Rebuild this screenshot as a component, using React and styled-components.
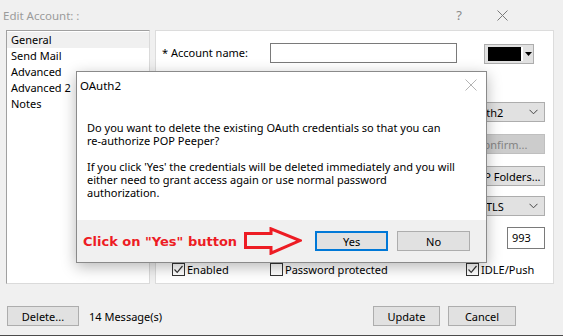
import React from "react";
import styled, { createGlobalStyle } from "styled-components";

const UI_FONT = `"Noto Sans", "Open Sans", sans-serif`;

const GlobalStyle = createGlobalStyle`
  html, body { margin: 0; padding: 0; background: #f0f0f0; }
  body { font-family: ${UI_FONT}; font-size: 11px; color: #000; }
  * { box-sizing: border-box; }
`;

const Window = styled.div`
  position: relative;
  width: 563px;
  height: 336px;
  background: #f0f0f0;
  border-bottom: 1px solid #4b4b4b;
  display: flex;
  flex-direction: column;
  overflow: hidden;
`;

const TitleBar = styled.div`
  height: 30px;
  display: flex;
  align-items: center;
  padding: 0 38px 0 3px;
`;

const TitleText = styled.span`
  color: #9b9b9b;
  font-size: 11.5px;
  flex: 1;
`;

const TitleIcon = styled.span`
  width: ${(p) => p.$w}px;
  display: flex;
  justify-content: center;
  color: #8a8a8a;
  font-size: 13px;
`;

const Body = styled.div`
  height: 254px;
  display: flex;
  gap: 5px;
  padding: 0 9px 0 6px;
`;

const List = styled.div`
  width: 144px;
  background: #fff;
  border: 1px solid #dadada;
  border-top-color: #a0a0a0;
  border-left-color: #a0a0a0;
  padding-top: 1px;
`;

const ListItem = styled.div`
  height: 16px;
  line-height: 16px;
  padding-left: 4px;
  background: ${(p) => (p.$selected ? "#f0f0f0" : "transparent")};
`;

const Panel = styled.div`
  flex: 1;
  background: #fff;
  border: 1px solid #dcdcdc;
  padding: 12px 8px 0 6px;
  display: flex;
  flex-direction: column;
`;

const FormRow = styled.div`
  display: flex;
  align-items: flex-start;
  height: 21px;
`;

const Label = styled.span`
  width: 108px;
  line-height: 20px;
`;

const TextInput = styled.div`
  width: ${(p) => p.$w}px;
  height: ${(p) => p.$h || 20}px;
  border: 1px solid #7a7a7a;
  background: #fff;
  padding-left: 4px;
  line-height: ${(p) => (p.$h || 20) - 2}px;
`;

const ColorButton = styled.div`
  margin: 1px 0 0 27px;
  width: 50px;
  height: 20px;
  border: 1px solid #adadad;
  background: #e1e1e1;
  display: flex;
  align-items: center;
  padding-left: 3px;
  gap: 2px;
`;

const Swatch = styled.div`
  width: 33px;
  height: 14px;
  background: #000;
  border-right: 2px solid #fff;
  box-sizing: content-box;
`;

const MidArea = styled.div`
  display: flex;
  justify-content: flex-end;
  margin-top: 38px;
`;

const RightCol = styled.div`
  width: 86px;
  display: flex;
  flex-direction: column;
  align-items: flex-end;
`;

const Select = styled.div`
  width: 100%;
  height: 20px;
  border: 1px solid #adadad;
  background: #e1e1e1;
  display: flex;
  align-items: center;
  justify-content: space-between;
  padding: 0 6px 0 4px;
  margin-top: ${(p) => p.$mt || 0}px;
`;

const WinButton = styled.div`
  width: ${(p) => (p.$w ? `${p.$w}px` : "100%")};
  height: 20px;
  border: 1px solid ${(p) => (p.$disabled ? "#bfbfbf" : "#adadad")};
  background: ${(p) => (p.$disabled ? "#cccccc" : "#e1e1e1")};
  color: ${(p) => (p.$disabled ? "#838383" : "#000")};
  display: flex;
  align-items: center;
  justify-content: center;
  margin-top: ${(p) => p.$mt || 0}px;
  flex-shrink: 0;
`;

const PortInput = styled(TextInput)`
  margin-top: 11px;
`;

const CheckRow = styled.div`
  display: grid;
  grid-template-columns: 98px 196px auto;
  padding-left: 10px;
  margin-top: 14px;
`;

const CheckItem = styled.label`
  display: flex;
  align-items: center;
  gap: 2px;
  line-height: 13px;
`;

const Box = styled.span`
  width: 13px;
  height: 13px;
  border: 1px solid #333;
  background: #fff;
  display: flex;
  align-items: center;
  justify-content: center;
`;

const Footer = styled.div`
  display: flex;
  align-items: center;
  padding: 22px 47px 0 7px;
  gap: 8px;
`;

const Count = styled.span`
  margin-left: 2px;
  flex: 1;
`;

/* Modal */
const Dialog = styled.div`
  position: absolute;
  left: 76px;
  top: 71px;
  width: 411px;
  height: 192px;
  border: 1px solid #8a8a8a;
  background: #fff;
  box-shadow: 0 4px 14px rgba(0, 0, 0, 0.28);
  display: flex;
  flex-direction: column;
`;

const DialogHeader = styled.div`
  height: 26px;
  display: flex;
  align-items: center;
  justify-content: space-between;
  padding: 0 9px 0 3px;
  font-size: 11.5px;
`;

const DialogMessage = styled.div`
  flex: 1;
  padding: 23px 10px 0 10px;
  line-height: 13px;
`;

const Para = styled.p`
  margin: 0 0 13px 0;
`;

const DialogFooter = styled.div`
  height: 42px;
  background: #f0f0f0;
  display: flex;
  align-items: center;
  padding: 0 15px 0 6px;
`;

const Callout = styled.span`
  color: #ed1c24;
  font-family: "DejaVu Sans", sans-serif;
  font-weight: bold;
  font-size: 13px;
`;

const ArrowSvg = styled.svg`
  margin-left: 7px;
  flex-shrink: 0;
`;

const DialogButton = styled.div`
  width: 73px;
  height: 20px;
  border: ${(p) => (p.$default ? "2px solid #0078d7" : "1px solid #adadad")};
  background: #e1e1e1;
  display: flex;
  align-items: center;
  justify-content: center;
  margin-left: ${(p) => p.$ml}px;
`;

const Check = () => (
  <svg width="11" height="11" viewBox="0 0 11 11">
    <path d="M1.5 5.5 L4.2 8.3 L9.5 2" fill="none" stroke="#333" strokeWidth="1.2" />
  </svg>
);

const Chevron = () => (
  <svg width="9" height="6" viewBox="0 0 9 6">
    <path d="M0.5 0.8 L4.5 4.8 L8.5 0.8" fill="none" stroke="#444" strokeWidth="1" />
  </svg>
);

export default function App() {
  return (
    <>
      <GlobalStyle />
      <Window>
        <TitleBar>
          <TitleText>Edit Account: :</TitleText>
          <TitleIcon $w={40}>?</TitleIcon>
          <TitleIcon $w={46}>
            <svg width="11" height="11" viewBox="0 0 11 11">
              <path d="M0.5 0.5 L10.5 10.5 M10.5 0.5 L0.5 10.5" stroke="#7a7a7a" strokeWidth="1" />
            </svg>
          </TitleIcon>
        </TitleBar>
        <Body>
          <List>
            <ListItem $selected>General</ListItem>
            <ListItem>Send Mail</ListItem>
            <ListItem>Advanced</ListItem>
            <ListItem>Advanced 2</ListItem>
            <ListItem>Notes</ListItem>
          </List>
          <Panel>
            <FormRow>
              <Label>* Account name:</Label>
              <TextInput $w={187} />
              <ColorButton>
                <Swatch />
                <svg width="7" height="4" viewBox="0 0 7 4">
                  <path d="M0 0 H7 L3.5 4 Z" fill="#000" />
                </svg>
              </ColorButton>
            </FormRow>
            <MidArea>
              <RightCol>
                <Select>
                  <span>OAuth2</span>
                  <Chevron />
                </Select>
                <WinButton $disabled $mt={12}>Confirm...</WinButton>
                <WinButton $mt={12}>IMAP Folders...</WinButton>
                <Select $mt={10}>
                  <span>SSL/TLS</span>
                  <Chevron />
                </Select>
                <PortInput $w={38} $h={22}>993</PortInput>
              </RightCol>
            </MidArea>
            <CheckRow>
              <CheckItem>
                <Box><Check /></Box>Enabled
              </CheckItem>
              <CheckItem>
                <Box />Password protected
              </CheckItem>
              <CheckItem>
                <Box><Check /></Box>IDLE/Push
              </CheckItem>
            </CheckRow>
          </Panel>
        </Body>
        <Footer>
          <WinButton $w={72}>Delete...</WinButton>
          <Count>14 Message(s)</Count>
          <WinButton $w={67}>Update</WinButton>
          <WinButton $w={68}>Cancel</WinButton>
        </Footer>

        <Dialog>
          <DialogHeader>
            <span>OAuth2</span>
            <svg width="12" height="12" viewBox="0 0 12 12">
              <path d="M0.5 0.5 L11.5 11.5 M11.5 0.5 L0.5 11.5" stroke="#b4b4b4" strokeWidth="1" />
            </svg>
          </DialogHeader>
          <DialogMessage>
            <Para>
              Do you want to delete the existing OAuth credentials so that you can
              <br />
              re-authorize POP Peeper?
            </Para>
            <Para>
              If you click 'Yes' the credentials will be deleted immediately and you will
              <br />
              either need to grant access again or use normal password
              <br />
              authorization.
            </Para>
          </DialogMessage>
          <DialogFooter>
            <Callout>Click on "Yes" button</Callout>
            <ArrowSvg width="58" height="28" viewBox="0 0 58 28">
              <polygon
                points="1.5,6.5 27,6.5 27,1.8 56,13.5 27,26.2 27,20.5 1.5,20.5"
                fill="none"
                stroke="#ed1c24"
                strokeWidth="3"
                strokeLinejoin="miter"
              />
            </ArrowSvg>
            <DialogButton $default $ml={13}>Yes</DialogButton>
            <DialogButton $ml={9}>No</DialogButton>
          </DialogFooter>
        </Dialog>
      </Window>
    </>
  );
}
